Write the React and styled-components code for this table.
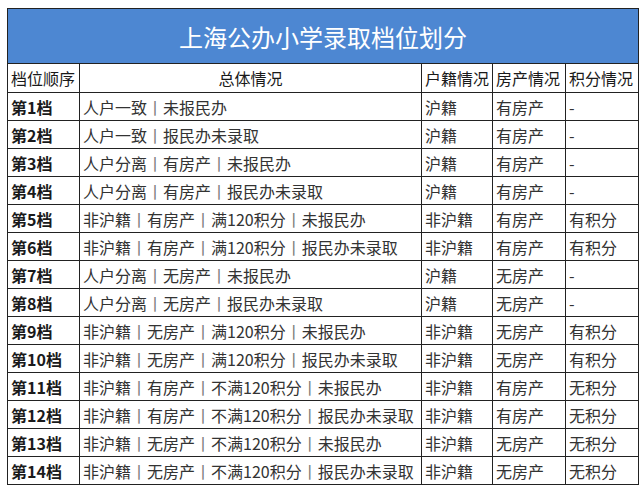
import React from 'react';
import styled, { createGlobalStyle } from 'styled-components';

const GlobalStyle = createGlobalStyle`
  html, body {
    margin: 0;
    padding: 0;
    background: #ffffff;
  }
  body {
    font-family: "Noto Sans CJK SC", "Noto Sans", sans-serif;
  }
`;

const Page = styled.div`
  padding: 8px 0 0 7px;
`;

const StyledTable = styled.table`
  width: 631px;
  border-collapse: collapse;
  table-layout: fixed;
  border: 1px solid #222;
`;

const TitleCell = styled.th`
  height: 54px;
  padding: 0;
  background: #4d87d2;
  color: #ffffff;
  font-size: 24px;
  font-weight: 400;
  text-align: center;
  border: 1px solid #222;
`;

const HeadRow = styled.tr`
  height: 29px;
`;

const HeadCell = styled.th`
  padding: 0 3px;
  font-size: 16px;
  font-weight: 400;
  color: #1a1a1a;
  text-align: ${(p) => (p.$center ? 'center' : 'left')};
  border: 1px solid #222;
  white-space: nowrap;
  overflow: hidden;
`;

const Row = styled.tr`
  height: 28px;
`;

const Cell = styled.td`
  padding: 0 3px;
  font-size: 16px;
  font-weight: ${(p) => (p.$bold ? 700 : 400)};
  color: ${(p) => (p.$bold ? '#1a1a1a' : '#333333')};
  border: 1px solid #222;
  white-space: nowrap;
  overflow: hidden;
  line-height: 26px;
`;

const Sep = styled.span`
  color: #7a7a7a;
`;

const rows = [
  ['人户一致', '未报民办', '沪籍', '有房产', '-'],
  ['人户一致', '报民办未录取', '沪籍', '有房产', '-'],
  ['人户分离', '有房产', '未报民办', '沪籍', '有房产', '-'],
  ['人户分离', '有房产', '报民办未录取', '沪籍', '有房产', '-'],
  ['非沪籍', '有房产', '满120积分', '未报民办', '非沪籍', '有房产', '有积分'],
  ['非沪籍', '有房产', '满120积分', '报民办未录取', '非沪籍', '有房产', '有积分'],
  ['人户分离', '无房产', '未报民办', '沪籍', '无房产', '-'],
  ['人户分离', '无房产', '报民办未录取', '沪籍', '无房产', '-'],
  ['非沪籍', '无房产', '满120积分', '未报民办', '非沪籍', '无房产', '有积分'],
  ['非沪籍', '无房产', '满120积分', '报民办未录取', '非沪籍', '无房产', '有积分'],
  ['非沪籍', '有房产', '不满120积分', '未报民办', '非沪籍', '有房产', '无积分'],
  ['非沪籍', '有房产', '不满120积分', '报民办未录取', '非沪籍', '有房产', '无积分'],
  ['非沪籍', '无房产', '不满120积分', '未报民办', '非沪籍', '无房产', '无积分'],
  ['非沪籍', '无房产', '不满120积分', '报民办未录取', '非沪籍', '无房产', '无积分'],
];

const Summary = ({ parts }) =>
  parts.map((part, i) => (
    <React.Fragment key={i}>
      {i > 0 && <Sep>丨</Sep>}
      {part}
    </React.Fragment>
  ));

export default function App() {
  return (
    <>
      <GlobalStyle />
      <Page>
        <StyledTable>
          <colgroup>
            <col style={{ width: 72 }} />
            <col style={{ width: 342 }} />
            <col style={{ width: 71 }} />
            <col style={{ width: 73 }} />
            <col style={{ width: 73 }} />
          </colgroup>
          <thead>
            <tr>
              <TitleCell colSpan={5}>上海公办小学录取档位划分</TitleCell>
            </tr>
            <HeadRow>
              <HeadCell>档位顺序</HeadCell>
              <HeadCell $center>总体情况</HeadCell>
              <HeadCell>户籍情况</HeadCell>
              <HeadCell>房产情况</HeadCell>
              <HeadCell>积分情况</HeadCell>
            </HeadRow>
          </thead>
          <tbody>
            {rows.map((r, i) => {
              const tail = r.slice(-3);
              const parts = r.slice(0, -3);
              return (
                <Row key={i}>
                  <Cell $bold>第{i + 1}档</Cell>
                  <Cell>
                    <Summary parts={parts} />
                  </Cell>
                  {tail.map((t, j) => (
                    <Cell key={j}>{t}</Cell>
                  ))}
                </Row>
              );
            })}
          </tbody>
        </StyledTable>
      </Page>
    </>
  );
}
